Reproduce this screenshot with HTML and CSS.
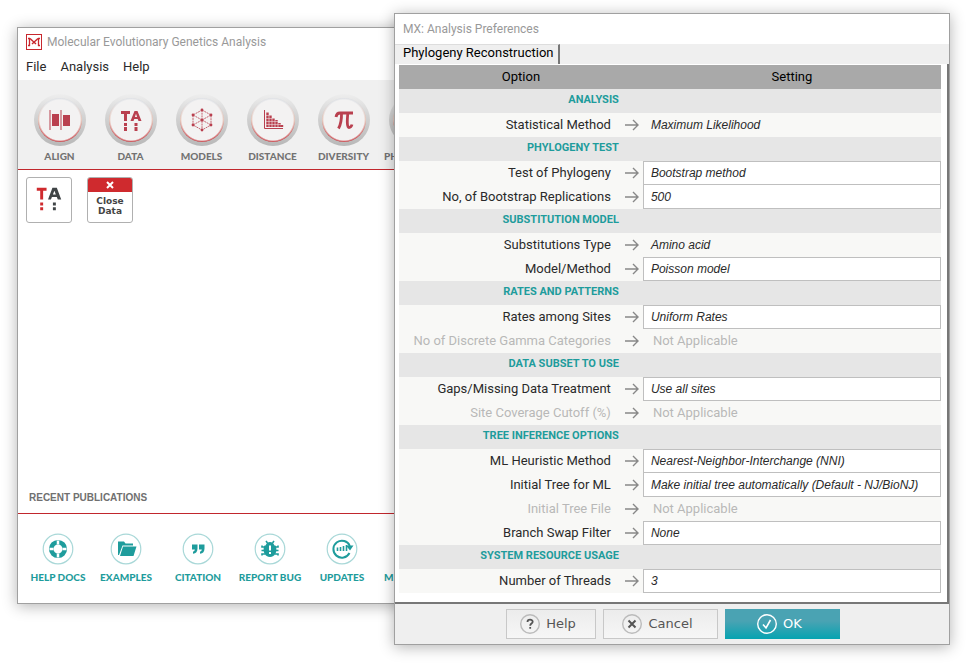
FILE: index.html
```html
<!DOCTYPE html>
<html lang="en">
<head>
<meta charset="utf-8">
<title>Molecular Evolutionary Genetics Analysis</title>
<link rel="stylesheet" href="styles.css">
</head>
<body>
<main class="window app">
  <header class="titlebar app-title">
    <svg class="logo" viewBox="0 0 16 16"><rect x="0.5" y="0.5" width="15" height="15" fill="#fff" stroke="#c8282e"/><path d="M2 4.500h2M2 11.500h2M3.500 4v8M14 4.500h-2M14 11.500h-2M12.500 4v8" fill="none" stroke="#c8282e" stroke-width="1.300"/><path d="M4 4.500l6 5.500M12 4.500L6 10" fill="none" stroke="#c8282e" stroke-width="1.400"/></svg>
    <h1>Molecular Evolutionary Genetics Analysis</h1>
  </header>
  <nav class="menu">
    <button type="button">File</button>
    <button type="button">Analysis</button>
    <button type="button">Help</button>
  </nav>
  <div class="toolbar">
    <button type="button" class="tool"><span class="dial"><svg viewBox="0 0 24 24" fill="#b9404f"><path d="M1.500 2h1v20h-1zM12.500 2h1v20h-1zM4 6h7v12H4zM15 7h7v11h-7z"/></svg></span>ALIGN</button>
    <button type="button" class="tool"><span class="dial"><svg viewBox="0 0 24 24" fill="#b9404f"><path d="M2 3h9v3H8v7H5V6H2zM15.500 3h3l4 10h-3l-.8-2h-3.400l-.8 2h-3zM17 5.800l-1.100 3.200h2.200zM5 15h3v3H5zM5 19h3v4H5zM15.500 15h3v3h-3zM15.500 19h3v4h-3z"/></svg></span>DATA</button>
    <button type="button" class="tool"><span class="dial"><svg viewBox="0 0 24 24"><path d="M12 2l9 5v10l-9 5-9-5V7zM12 12l9-5M12 12L3 7M12 12l9 5M12 12l-9 5M12 2v20" fill="none" stroke="#b9404f" stroke-width=".8" stroke-dasharray="2 .7"/><g fill="#b9404f"><circle cx="12" cy="2" r="1.400"/><circle cx="21" cy="7" r="1.400"/><circle cx="21" cy="17" r="1.400"/><circle cx="12" cy="22" r="1.400"/><circle cx="3" cy="17" r="1.400"/><circle cx="3" cy="7" r="1.400"/><circle cx="12" cy="12" r="1.500"/></g></svg></span>MODELS</button>
    <button type="button" class="tool"><span class="dial"><svg viewBox="0 0 24 24" fill="none" stroke="#b9404f"><path d="M3.500 2v18.500H22" stroke-width="1"/><path d="M6.500 19V4M9.500 19V7M12.500 19v-9M15.500 19v-7M18.500 19v-4M21 19v-2" stroke-width="2.400" stroke-dasharray="2.500 .5"/></svg></span>DISTANCE</button>
    <button type="button" class="tool"><span class="dial"><svg viewBox="0 0 24 24" fill="none" stroke="#b9404f"><path d="M4 9C4.500 5.500 6 5 8 5h13" stroke-width="2.800"/><path d="M9.500 5c.2 7-.5 11-3 15.500M15.800 5c-.5 6-1.200 14.500 1.200 14.500 1.800 0 2.500-1.200 3-3" stroke-width="2.800"/></svg></span>DIVERSITY</button>
    <button type="button" class="tool"><span class="dial"></span>PHYLOGENY</button>
  </div>
  <div class="workspace">
    <button type="button" class="tile" aria-label="Data"><svg viewBox="0 0 45 45"><path d="M10 10h10v3h-3.500v9h-3v-9H10zM13.500 25h3v3h-3zM13.500 30h3v3h-3z" fill="#cf2a2e"/><path d="M26 10h4.500l4.500 12h-3.500l-1-2.500h-5l-1 2.500H21.500zM28 13l-1.500 4h3zM26.500 25h3v3h-3zM26.500 30h3v3h-3z" fill="#3f4446"/></svg></button>
    <button type="button" class="tile close"><span class="cap"><svg viewBox="0 0 10 10"><path d="M2 2l6 6M8 2L2 8" stroke="#fff" stroke-width="2"/></svg></span><span class="close-text">Close<br>Data</span></button>
  </div>
  <h2 class="recent">RECENT PUBLICATIONS</h2>
  <nav class="links">
    <a href="#docs"><svg viewBox="0 0 32 32"><circle class="ring" cx="16" cy="16" r="14.800"/><circle cx="16" cy="16" r="6.800" fill="none" stroke="#1e9c9c" stroke-width="4.600"/><path d="M16 7.500v4M16 20.500v4M7.500 16h4M20.500 16h4" stroke="#fff" stroke-width="2.500"/></svg>HELP DOCS</a>
    <a href="#examples"><svg viewBox="0 0 32 32"><circle class="ring" cx="16" cy="16" r="14.800"/><path d="M8 22V8.500h6l1.500 2H23v2H12.500L9 22zM10 23l3-9.500h13.500L23.500 23z" fill="#1e9c9c"/></svg>EXAMPLES</a>
    <a href="#citation"><svg viewBox="0 0 32 32"><circle class="ring" cx="16" cy="16" r="14.800"/><path d="M10 11.500h5.500v4c0 3-1.500 5-4.500 5.200v-2c1.200-.3 1.800-1.200 1.800-2.200H10zM17 11.500h5.500v4c0 3-1.500 5-4.500 5.200v-2c1.200-.3 1.800-1.200 1.800-2.200H17z" fill="#1e9c9c"/></svg>CITATION</a>
    <a href="#bug"><svg viewBox="0 0 32 32"><circle class="ring" cx="16" cy="16" r="14.800"/><path d="M10.500 12.500h11c1.200 2 1.200 6 0 8-1 2-3 3.500-5.500 3.500s-4.500-1.500-5.500-3.500c-1.200-2-1.200-6 0-8zM11.500 12.600c1-2.600 2.500-3.600 4.500-3.600s3.500 1 4.500 3.600z" fill="#1e9c9c"/><path d="M13.500 10L12 8M18.500 10L20 8M11 14H8v-1.500M21 14h3v-1.500M7.500 17.500h17M11 21H8v1.500M21 21h3v1.500" fill="none" stroke="#1e9c9c" stroke-width="1.600"/><path d="M16 12.500v5M16 19v2" stroke="#fff" stroke-width="2"/></svg>REPORT BUG</a>
    <a href="#updates"><svg viewBox="0 0 32 32"><circle class="ring" cx="16" cy="16" r="14.800"/><path d="M23.500 20A8.500 8.500 0 1 1 23.800 13" fill="none" stroke="#1e9c9c" stroke-width="2"/><path d="M20 12.500h7.500L24 17.500z" fill="#1e9c9c"/><path d="M11.500 18v-3.500M14.500 18v-4M17.500 18v-5M20.500 18v-6" stroke="#1e9c9c" stroke-width="1.600"/></svg>UPDATES</a>
    <a href="#links"><svg viewBox="0 0 32 32"><circle class="ring" cx="16" cy="16" r="14.800"/></svg>MEGA LINKS</a>
  </nav>
</main>

<form class="window dialog">
  <header class="titlebar"><h2>MX: Analysis Preferences</h2></header>
  <div class="tabs"><button type="button" class="tab">Phylogeny Reconstruction</button></div>
  <div class="sheet">
    <table>
      <colgroup><col class="col-option"><col></colgroup>
      <thead><tr><th>Option</th><th>Setting</th></tr></thead>
      <tbody>
        <tr class="group"><th>ANALYSIS</th><td></td></tr>
        <tr><th><span class="name">Statistical Method<svg class="arrow" viewBox="0 0 14 12"><path d="M0 6h13M8 1l5 5-5 5"/></svg></span></th><td class="fixed">Maximum Likelihood</td></tr>
        <tr class="group"><th>PHYLOGENY TEST</th><td></td></tr>
        <tr><th><label class="name" for="test">Test of Phylogeny<svg class="arrow" viewBox="0 0 14 12"><path d="M0 6h13M8 1l5 5-5 5"/></svg></label></th><td><select id="test"><option>Bootstrap method</option></select></td></tr>
        <tr class="joined"><th><label class="name" for="reps">No, of Bootstrap Replications<svg class="arrow" viewBox="0 0 14 12"><path d="M0 6h13M8 1l5 5-5 5"/></svg></label></th><td><input id="reps" type="text" value="500"></td></tr>
        <tr class="group"><th>SUBSTITUTION MODEL</th><td></td></tr>
        <tr><th><span class="name">Substitutions Type<svg class="arrow" viewBox="0 0 14 12"><path d="M0 6h13M8 1l5 5-5 5"/></svg></span></th><td class="fixed">Amino acid</td></tr>
        <tr><th><label class="name" for="model">Model/Method<svg class="arrow" viewBox="0 0 14 12"><path d="M0 6h13M8 1l5 5-5 5"/></svg></label></th><td><select id="model"><option>Poisson model</option></select></td></tr>
        <tr class="group"><th>RATES AND PATTERNS</th><td></td></tr>
        <tr><th><label class="name" for="rates">Rates among Sites<svg class="arrow" viewBox="0 0 14 12"><path d="M0 6h13M8 1l5 5-5 5"/></svg></label></th><td><select id="rates"><option>Uniform Rates</option></select></td></tr>
        <tr class="off"><th><span class="name">No of Discrete Gamma Categories<svg class="arrow" viewBox="0 0 14 12"><path d="M0 6h13M8 1l5 5-5 5"/></svg></span></th><td>Not Applicable</td></tr>
        <tr class="group"><th>DATA SUBSET TO USE</th><td></td></tr>
        <tr><th><label class="name" for="gaps">Gaps/Missing Data Treatment<svg class="arrow" viewBox="0 0 14 12"><path d="M0 6h13M8 1l5 5-5 5"/></svg></label></th><td><select id="gaps"><option>Use all sites</option></select></td></tr>
        <tr class="off"><th><span class="name">Site Coverage Cutoff (%)<svg class="arrow" viewBox="0 0 14 12"><path d="M0 6h13M8 1l5 5-5 5"/></svg></span></th><td>Not Applicable</td></tr>
        <tr class="group"><th>TREE INFERENCE OPTIONS</th><td></td></tr>
        <tr><th><label class="name" for="heuristic">ML Heuristic Method<svg class="arrow" viewBox="0 0 14 12"><path d="M0 6h13M8 1l5 5-5 5"/></svg></label></th><td><select id="heuristic"><option>Nearest-Neighbor-Interchange (NNI)</option></select></td></tr>
        <tr class="joined"><th><label class="name" for="initial">Initial Tree for ML<svg class="arrow" viewBox="0 0 14 12"><path d="M0 6h13M8 1l5 5-5 5"/></svg></label></th><td><select id="initial"><option>Make initial tree automatically (Default - NJ/BioNJ)</option></select></td></tr>
        <tr class="off"><th><span class="name">Initial Tree File<svg class="arrow" viewBox="0 0 14 12"><path d="M0 6h13M8 1l5 5-5 5"/></svg></span></th><td>Not Applicable</td></tr>
        <tr><th><label class="name" for="swap">Branch Swap Filter<svg class="arrow" viewBox="0 0 14 12"><path d="M0 6h13M8 1l5 5-5 5"/></svg></label></th><td><select id="swap"><option>None</option></select></td></tr>
        <tr class="group"><th>SYSTEM RESOURCE USAGE</th><td></td></tr>
        <tr><th><label class="name" for="threads">Number of Threads<svg class="arrow" viewBox="0 0 14 12"><path d="M0 6h13M8 1l5 5-5 5"/></svg></label></th><td><input id="threads" type="text" value="3"></td></tr>
      </tbody>
    </table>
  </div>
  <footer class="actions">
    <button type="button" class="small"><svg viewBox="0 0 20 20"><circle cx="10" cy="10" r="9.300" fill="none" stroke="#bbb" stroke-width="1.400"/><path d="M7.500 8c0-3.200 5.200-3 5.200-.3 0 1.900-2.500 1.800-2.500 4M10.200 13v1.800" fill="none" stroke="#555" stroke-width="1.800"/></svg>Help</button>
    <button type="button"><svg viewBox="0 0 20 20"><circle cx="10" cy="10" r="9.300" fill="none" stroke="#bbb" stroke-width="1.400"/><path d="M6.500 6.500l7 7M13.500 6.500l-7 7" stroke="#555" stroke-width="2"/></svg>Cancel</button>
    <button type="submit" class="ok"><svg viewBox="0 0 20 20"><circle cx="10" cy="10" r="9.300" fill="none" stroke="#fff" stroke-width="1.400"/><path d="M6 10.500l3 3.300L13.500 6" fill="none" stroke="#fff" stroke-width="1.600"/></svg>OK</button>
  </footer>
</form>
</body>
</html>
```

FILE: styles.css
```css
* { box-sizing: border-box; }

body {
  margin: 0;
  min-height: 100vh;
  background: #fff;
  overflow: hidden;
  font: 13px/16px Roboto, "Liberation Sans", sans-serif;
  color: #2a2a2a;
}

button { padding: 0; border: 0; background: none; font: inherit; color: inherit; }
h1, h2 { margin: 0; font-weight: 400; }

.window {
  position: absolute;
  display: flex;
  flex-direction: column;
  background: #fff;
  border: 1px solid #a0a0a0;
  box-shadow: 0 2px 14px rgba(0, 0, 0, 0.3);
}

.titlebar {
  display: flex;
  align-items: center;
  gap: 5px;
  height: 30px;
  padding: 0 8px;
  color: #999;
}
.titlebar h1, .titlebar h2 { font: 12px/16px Roboto, sans-serif; white-space: nowrap; }

.app { left: 17px; top: 27px; bottom: 59px; right: 120px; overflow: hidden; }
.app > * { flex-shrink: 0; }
.app-title { height: 28px; }
.logo { width: 16px; height: 16px; }

.menu { display: flex; gap: 14px; height: 24px; padding: 0 8px; }
.menu button { height: 22px; }

.toolbar {
  display: flex;
  height: 90px;
  padding: 14px 0 0 6px;
  background: #f0f0f0;
  border-bottom: 1px solid #c1272d;
}
.tool {
  display: flex;
  flex: none;
  flex-direction: column;
  align-items: center;
  gap: 2px;
  width: 71px;
  font: 900 10px/16px Lato, sans-serif;
  color: #737373;
}
.dial {
  position: relative;
  display: grid;
  place-items: center;
  width: 52px;
  height: 52px;
  border-radius: 50%;
  background: linear-gradient(#eeeeee, #d2d2d2 45%, #b8b8b8);
}
.dial::before {
  content: "";
  position: absolute;
  inset: 4px;
  border-radius: 50%;
  background:
    radial-gradient(circle, #f3f2f2 20px, transparent 22px),
    linear-gradient(#dcdfe4 10%, #e5bdae 50%, #c8282e 90%);
}
.dial svg { position: relative; width: 24px; height: 24px; }

.workspace { display: flex; flex: 1; align-items: flex-start; gap: 15px; padding: 7px 8px; }
.tile {
  width: 46px;
  height: 46px;
  overflow: hidden;
  border: 1px solid #b0b0b0;
  border-radius: 3px;
  background: #fff;
}
.tile svg { display: block; width: 100%; }
.close { display: flex; flex-direction: column; }
.cap { display: grid; place-items: center; width: 100%; height: 14px; background: #cf2a2e; }
.cap svg { width: 10px; }
.close-text { width: 100%; padding-top: 4px; font: 700 9px/10px "DejaVu Sans", sans-serif; color: #444; }

.recent {
  padding: 0 11px;
  height: 24px;
  border-bottom: 1px solid #c1272d;
  font: 700 10px/16px "Liberation Sans", sans-serif;
  color: #707070;
}

.links { display: flex; height: 89px; padding: 19px 0 0 4px; }
.links a {
  display: flex;
  flex: none;
  flex-direction: column;
  align-items: center;
  gap: 4px;
  width: 72px;
  font: 900 10px/16px Lato, sans-serif;
  color: #1e9c9c;
  text-decoration: none;
  white-space: nowrap;
}
.links a:first-child { width: 64px; margin-left: 4px; }
.links svg { width: 32px; height: 32px; }
.ring { fill: #fff; stroke: #a9d8d8; stroke-width: 1.2; }

.dialog { left: 394px; right: 24px; top: 13px; }
.tabs { display: flex; height: 20px; background: #efefef; }
.tab {
  height: 20px;
  padding: 0 5px 3px 8px;
  border-right: 2px solid #777;
  border-top: 1px solid #ddd;
  color: #000;
}
.sheet {
  padding: 1px 6px 9px 4px;
  border-right: 2px solid #777;
  border-bottom: 2px solid #777;
}

table { width: 100%; border-collapse: collapse; table-layout: fixed; }
.col-option { width: 45%; }
tr { height: 24px; background: #f8f8f6; }
th, td { padding: 0; height: 24px; font-weight: 400; white-space: nowrap; }
th { text-align: right; }
thead tr { background: #a9a9a9; }
thead th { text-align: center; color: #000; }
.group { background: #e6e6e6; }
.group th { padding-right: 24px; padding-bottom: 2px; font: 700 11px/16px Roboto, sans-serif; color: #1e9c9c; }
.name { display: flex; align-items: center; justify-content: flex-end; gap: 14px; padding-right: 4px; }
.arrow { width: 14px; height: 12px; fill: none; stroke: #888; stroke-width: 1.4; }
.fixed { padding-left: 8px; font: italic 12px/16px "Liberation Sans", sans-serif; }
.off { color: #b8b8b8; }
.off td { padding-left: 10px; }

select, input {
  display: block;
  width: 100%;
  height: 24px;
  margin: 0;
  padding: 0 7px;
  border: 1px solid #bfbfbf;
  border-radius: 0;
  background: #fff;
  appearance: none;
  font: italic 12px/16px "Liberation Sans", sans-serif;
  color: #2a2a2a;
}
.joined select, .joined input { border-top: 0; }

.actions {
  display: flex;
  justify-content: center;
  gap: 7px;
  height: 40px;
  padding: 5px 0 5px 2px;
  background: #efefef;
}
.actions button {
  display: flex;
  align-items: center;
  justify-content: center;
  gap: 6px;
  width: 115px;
  height: 30px;
  padding-right: 6px;
  border: 1px solid #c8c8c8;
  background: linear-gradient(#ececec, #f6f6f6);
  font: 13px/16px "DejaVu Sans", sans-serif;
  color: #555;
}
.actions .small { width: 90px; }
.actions svg { width: 20px; height: 20px; }
.actions .ok { border: 0; background: linear-gradient(#4aa3b3 40%, #06a3b1); color: #fff; }
```
